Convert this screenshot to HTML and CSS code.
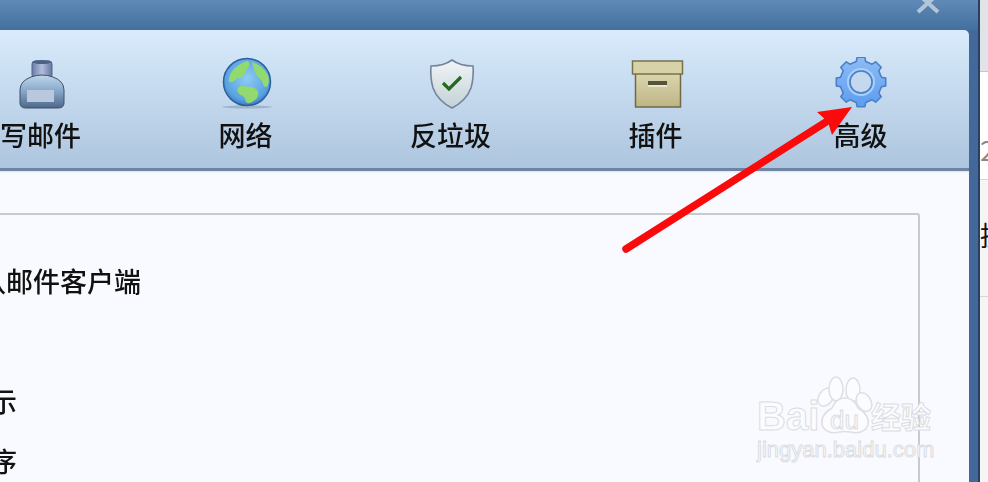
FILE: index.html
```html
<!DOCTYPE html>
<html lang="zh-CN">
<head>
  <meta charset="UTF-8">
  <title>选项</title>
  <link rel="stylesheet" href="styles.css">
</head>
<body>

  <div class="page">
    <div class="window">
      <div class="titlebar">
        <svg class="close" width="26" height="16" viewBox="0 0 26 16">
          <path d="M3 -6 L23 12 M23 -6 L3 12" stroke="#b3c6d9" stroke-width="4" fill="none"/>
        </svg>
      </div>

      <div class="toolbar">
        <div class="tool">
          <svg class="tool-icon" width="56" height="56" viewBox="0 0 56 56">
            <defs>
              <linearGradient id="inkBody" x1="0" y1="0" x2="0" y2="1">
                <stop offset="0" stop-color="#c0d6ea"/>
                <stop offset="0.5" stop-color="#86a6c8"/>
                <stop offset="1" stop-color="#4d678a"/>
              </linearGradient>
              <linearGradient id="inkNeck" x1="0" y1="0" x2="1" y2="0">
                <stop offset="0" stop-color="#6a7ca6"/>
                <stop offset="0.5" stop-color="#b4bedc"/>
                <stop offset="1" stop-color="#64759f"/>
              </linearGradient>
            </defs>
            <rect x="19" y="4" width="20" height="17" rx="3" fill="url(#inkNeck)" stroke="#52648a"/>
            <ellipse cx="29" cy="5" rx="9" ry="2" fill="#4c6186"/>
            <path d="M18 20 Q29 16 40 20 Q51 24 51 33 L51 46 Q51 51 45 51 L13 51 Q7 51 7 46 L7 33 Q7 24 18 20 Z" fill="url(#inkBody)" stroke="#3d5068"/>
            <rect x="14" y="33" width="27" height="12" fill="#b9c8dc"/>
          </svg>
          <span class="tool-label">写邮件</span>
        </div>

        <div class="tool">
          <svg class="tool-icon" width="56" height="56" viewBox="0 0 56 56">
            <defs>
              <radialGradient id="sea" cx="0.5" cy="0.42" r="0.62">
                <stop offset="0" stop-color="#8fcbf5"/>
                <stop offset="0.75" stop-color="#5aa2e0"/>
                <stop offset="1" stop-color="#2f72b8"/>
              </radialGradient>
            </defs>
            <ellipse cx="29" cy="50" rx="25" ry="1.5" fill="#8a9db3" opacity="0.6"/>
            <circle cx="29" cy="25" r="23.5" fill="url(#sea)" stroke="#2c5f9e" stroke-width="1.5"/>
            <path d="M11 25 Q10 18 17 11 Q24 5 30 4 Q33 8 29 12 Q27 15 27 17 Q23 22 19 21 Q16 26 11 25 Z" fill="#92da6e"/>
            <path d="M34 5 Q44 8 50 18 Q52 25 49 30 Q45 30 44 24 Q39 20 36 13 Z" fill="#92da6e"/>
            <path d="M20 31 Q24 27 29 30 Q36 29 40 34 Q41 40 37 43 Q31 48 28 45 Q27 39 23 38 Q18 35 20 31 Z" fill="#92da6e"/>
          </svg>
          <span class="tool-label">网络</span>
        </div>

        <div class="tool">
          <svg class="tool-icon" width="56" height="56" viewBox="0 0 56 56">
            <defs>
              <linearGradient id="shield" x1="0" y1="0" x2="0" y2="1">
                <stop offset="0" stop-color="#f1f4f6"/>
                <stop offset="1" stop-color="#c3d2d6"/>
              </linearGradient>
            </defs>
            <path d="M29 3 Q37 9 50 9 Q51 20 48 31 Q43 44 29 51 Q15 44 10 31 Q7 20 8 9 Q21 9 29 3 Z" fill="url(#shield)" stroke="#75839c" stroke-width="1.6"/>
            <path d="M20 26 L26 32 L38 20" fill="none" stroke="#24691f" stroke-width="3.2"/>
          </svg>
          <span class="tool-label">反垃圾</span>
        </div>

        <div class="tool">
          <svg class="tool-icon" width="56" height="56" viewBox="0 0 56 56">
            <defs>
              <linearGradient id="box" x1="0" y1="0" x2="0" y2="1">
                <stop offset="0" stop-color="#dcd6ae"/>
                <stop offset="1" stop-color="#bdb585"/>
              </linearGradient>
            </defs>
            <rect x="7.5" y="16" width="45" height="34" fill="url(#box)" stroke="#6f6a45" stroke-width="1.5"/>
            <rect x="4.5" y="4" width="50" height="13" fill="#d8d2a8" stroke="#77724b" stroke-width="1.5"/>
            <rect x="20" y="24" width="19" height="4" fill="#57543c"/>
            <rect x="20" y="28" width="19" height="2" fill="#ece7c8"/>
          </svg>
          <span class="tool-label">插件</span>
        </div>

        <div class="tool">
          <svg class="tool-icon" width="56" height="56" viewBox="-28 -25 56 56">
            <defs>
              <linearGradient id="gear" x1="0" y1="0" x2="0" y2="1">
                <stop offset="0" stop-color="#8ebcf4"/>
                <stop offset="1" stop-color="#5d9cf0"/>
              </linearGradient>
            </defs>
            <path d="M-4.7 -20.5 L-3.9 -24.7 L3.9 -24.7 L4.7 -20.5 L11.1 -17.8 L14.7 -20.2 L20.2 -14.7 L17.8 -11.1 L20.5 -4.7 L24.7 -3.9 L24.7 3.9 L20.5 4.7 L17.8 11.1 L20.2 14.7 L14.7 20.2 L11.1 17.8 L4.7 20.5 L3.9 24.7 L-3.9 24.7 L-4.7 20.5 L-11.1 17.8 L-14.7 20.2 L-20.2 14.7 L-17.8 11.1 L-20.5 4.7 L-24.7 3.9 L-24.7 -3.9 L-20.5 -4.7 L-17.8 -11.1 L-20.2 -14.7 L-14.7 -20.2 L-11.1 -17.8 Z" fill="url(#gear)" stroke="#4a80c8" stroke-width="1.6" stroke-linejoin="round"/>
            <circle r="13" fill="none" stroke="#a9d0fb" stroke-width="2"/>
            <circle r="11" fill="#c4d9ee" stroke="#4a80c8" stroke-width="1.6"/>
          </svg>
          <span class="tool-label">高级</span>
        </div>
      </div>

      <div class="content">
        <div class="group">
          <p class="option option-first">默认邮件客户端</p>
          <p class="option option-show">启动时显示</p>
          <p class="option option-sort">邮件按顺序</p>
        </div>
      </div>
    </div>

    <div class="behind">
      <div class="behind-top"></div>
      <div class="behind-row behind-num">2</div>
      <div class="behind-row behind-text">据</div>
      <div class="behind-rest"></div>
    </div>

    <!-- annotation drawn over the screenshot -->
    <svg class="arrow" width="988" height="482" viewBox="0 0 988 482">
      <path d="M626 249 L826 122" stroke="#fa0a0a" stroke-width="7.5" stroke-linecap="round" fill="none"/>
      <path d="M852 107 L817 112 L828 122 L832 135 Z" fill="#fa0a0a"/>
    </svg>

    <div class="watermark">
      <svg class="paw" width="100" height="90" viewBox="0 0 100 90">
        <g fill="#fbfcff" stroke="#dedfe3" stroke-width="1.5">
          <ellipse cx="28" cy="22" rx="7" ry="10" transform="rotate(35 28 22)"/>
          <ellipse cx="38" cy="14" rx="7" ry="12"/>
          <ellipse cx="55" cy="15" rx="7" ry="12"/>
          <ellipse cx="66" cy="27" rx="7" ry="10" transform="rotate(-30 66 27)"/>
          <path d="M47 23 Q56 23 60 33 Q72 40 70 50 Q66 60 52 57 Q47 56 42 57 Q28 60 24 50 Q22 40 34 33 Q38 23 47 23 Z"/>
        </g>
      </svg>
      <span class="wm-bai">Bai</span>
      <span class="wm-du">du</span>
      <span class="wm-jy">经验</span>
      <span class="wm-url">jingyan.baidu.com</span>
    </div>
  </div>

</body>
</html>
```

FILE: styles.css
```css
body {
  margin: 0;
  overflow: hidden;
  font-family: "Noto Sans CJK SC", "Liberation Sans", sans-serif;
  color: #111;
}

.page {
  position: relative;
  display: flex;
  width: 988px;
  height: 482px;
  overflow: hidden;
}

.window {
  display: flex;
  flex-direction: column;
  width: 969px;
  flex-shrink: 0;
  padding-right: 9px;
  border-right: 2px solid #2a3f5e;
  background-color: #42699a;
  overflow: hidden;
}

.titlebar {
  display: flex;
  justify-content: flex-end;
  height: 30px;
  padding-right: 37px;
  flex-shrink: 0;
  background: linear-gradient(#6089b6, #42709f);
  margin-right: -9px;
}

.close {
  display: block;
  filter: blur(0.5px);
}

.toolbar {
  display: flex;
  height: 138px;
  margin-left: -62px;
  border-bottom: 3px solid #6f84a0;
  border-top-right-radius: 5px;
  background: linear-gradient(#d9ebfc, #adc5de);
  flex-shrink: 0;
}

.tool {
  display: flex;
  flex-direction: column;
  align-items: center;
  width: 205px;
  padding-top: 27px;
}

.tool-icon {
  display: block;
  filter: blur(0.5px);
}

.tool-label {
  margin-top: 7px;
  font-size: 27px;
  font-weight: 500;
  line-height: 30px;
  white-space: nowrap;
  filter: blur(0.3px);
}

.content {
  flex: 1;
  padding: 42px 49px 0 0;
  background-color: #f9faff;
  box-shadow: inset 0 3px 2px -2px #dfe2e6;
}

.group {
  height: 400px;
  margin-left: -200px;
  border: 2px solid #c9cacc;
  border-radius: 3px;
  box-sizing: border-box;
}

.option {
  margin: 0;
  font-size: 27px;
  font-weight: 500;
  line-height: 30px;
  white-space: nowrap;
  filter: blur(0.3px);
}

.option-first {
  margin-top: 51px;
  margin-left: 150px;
}

.option-show {
  margin-top: 90px;
  margin-left: 80px;
}

.option-sort {
  margin-top: 30px;
  margin-left: 80px;
}

.behind {
  display: flex;
  flex-direction: column;
  flex: 1;
  min-width: 0;
  font-size: 27px;
  overflow: hidden;
}

.behind-top {
  height: 71px;
  border-bottom: 1px solid #c4c8cc;
  background-color: #e0e4e8;
}

.behind-row {
  white-space: nowrap;
  line-height: 30px;
}

.behind-num {
  height: 44px;
  padding-top: 63px;
  border-bottom: 1px solid #d6d6d6;
  background-color: #fff;
  color: #888;
}

.behind-text {
  height: 76px;
  padding-top: 40px;
  border-bottom: 1px solid #d6d6d6;
  background-color: #f5f5f5;
}

.behind-rest {
  flex: 1;
  background-color: #f5f5f5;
}

.arrow {
  position: absolute;
  top: 0;
  left: 0;
}

.watermark {
  position: absolute;
  top: 375px;
  left: 750px;
  width: 200px;
  height: 100px;
  color: #fbfcff;
  -webkit-text-stroke: 1px #dcdde1;
  font-family: "Liberation Sans", sans-serif;
}

.paw {
  position: absolute;
  top: 0;
  left: 48px;
}

.wm-bai {
  position: absolute;
  top: 17px;
  left: 7px;
  font-size: 40px;
  font-weight: bold;
  line-height: 48px;
}

.wm-du {
  position: absolute;
  top: 30px;
  left: 80px;
  font-size: 26px;
  line-height: 30px;
}

.wm-jy {
  position: absolute;
  top: 20px;
  left: 121px;
  font-family: "Noto Sans CJK SC", sans-serif;
  font-size: 30px;
  font-weight: bold;
  line-height: 40px;
  white-space: nowrap;
}

.wm-url {
  position: absolute;
  top: 62px;
  left: 7px;
  font-size: 22px;
  line-height: 26px;
  white-space: nowrap;
}
```
